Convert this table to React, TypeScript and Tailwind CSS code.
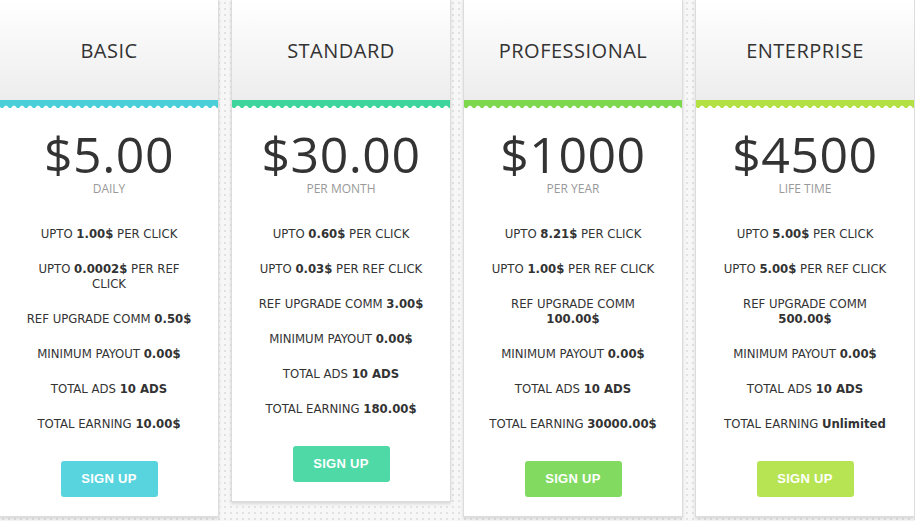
import React from 'react';

type Plan = {
  name: string;
  price: string;
  period: string;
  accent: string;
  button: string;
  features: React.ReactNode[];
};

const plans: Plan[] = [
  {
    name: 'BASIC',
    price: '$5.00',
    period: 'DAILY',
    accent: '#4acfd9',
    button: 'bg-[#58d4de]',
    features: [
      <>UPTO <b>1.00$</b> PER CLICK</>,
      <>UPTO <b>0.0002$</b> PER REF<br />CLICK</>,
      <>REF UPGRADE COMM <b>0.50$</b></>,
      <>MINIMUM PAYOUT <b>0.00$</b></>,
      <>TOTAL ADS <b>10 ADS</b></>,
      <>TOTAL EARNING <b>10.00$</b></>,
    ],
  },
  {
    name: 'STANDARD',
    price: '$30.00',
    period: 'PER MONTH',
    accent: '#3dd59c',
    button: 'bg-[#4fd9a7]',
    features: [
      <>UPTO <b>0.60$</b> PER CLICK</>,
      <>UPTO <b>0.03$</b> PER REF CLICK</>,
      <>REF UPGRADE COMM <b>3.00$</b></>,
      <>MINIMUM PAYOUT <b>0.00$</b></>,
      <>TOTAL ADS <b>10 ADS</b></>,
      <>TOTAL EARNING <b>180.00$</b></>,
    ],
  },
  {
    name: 'PROFESSIONAL',
    price: '$1000',
    period: 'PER YEAR',
    accent: '#7dd84e',
    button: 'bg-[#82da60]',
    features: [
      <>UPTO <b>8.21$</b> PER CLICK</>,
      <>UPTO <b>1.00$</b> PER REF CLICK</>,
      <>REF UPGRADE COMM<br /><b>100.00$</b></>,
      <>MINIMUM PAYOUT <b>0.00$</b></>,
      <>TOTAL ADS <b>10 ADS</b></>,
      <>TOTAL EARNING <b>30000.00$</b></>,
    ],
  },
  {
    name: 'ENTERPRISE',
    price: '$4500',
    period: 'LIFE TIME',
    accent: '#b3e042',
    button: 'bg-[#b7e452]',
    features: [
      <>UPTO <b>5.00$</b> PER CLICK</>,
      <>UPTO <b>5.00$</b> PER REF CLICK</>,
      <>REF UPGRADE COMM<br /><b>500.00$</b></>,
      <>MINIMUM PAYOUT <b>0.00$</b></>,
      <>TOTAL ADS <b>10 ADS</b></>,
      <>TOTAL EARNING <b>Unlimited</b></>,
    ],
  },
];

// scalloped accent strip under the header
function Scallop({ color }: { color: string }) {
  const id = 'sc' + color.replace('#', '');
  return (
    <svg width="100%" height="8" className="block">
      <defs>
        <pattern id={id} width="8" height="8" patternUnits="userSpaceOnUse" x="2">
          <rect width="8" height="8" fill={color} />
          <path d="M1 8 Q4 3 7 8 Z" fill="#fff" />
        </pattern>
      </defs>
      <rect width="100%" height="8" fill={`url(#${id})`} />
    </svg>
  );
}

function PlanCard({ plan }: { plan: Plan }) {
  return (
    <div className="w-[220px] shrink-0 self-start bg-white border border-[#dcdcdc] shadow-[0_2px_3px_rgba(0,0,0,0.12)]">
      <div className="h-[100px] bg-gradient-to-b from-white to-[#ededed] flex items-center justify-center">
        <h2 className="text-[20px] text-[#333] font-['Open_Sans',sans-serif] tracking-[0.5px] mt-[2px]">
          {plan.name}
        </h2>
      </div>
      <Scallop color={plan.accent} />
      <div className="flex flex-col items-center pt-[24px] pb-[19px]">
        <div className="text-[50px] leading-[44px] text-[#333] font-['Open_Sans',sans-serif] font-normal tracking-[0.5px]">
          {plan.price}
        </div>
        <div className="text-[12px] leading-[14px] text-[#999] font-['Open_Sans',sans-serif] mt-[6px]">
          {plan.period}
        </div>
        <ul className="mt-[30px] flex flex-col gap-[20px] text-center text-[13px] leading-[15px] text-[#333] font-['DejaVu_Sans_Condensed','DejaVu_Sans',sans-serif] whitespace-nowrap">
          {plan.features.map((f, i) => (
            <li key={i}>{f}</li>
          ))}
        </ul>
        <button
          className={`${plan.button} mt-[30px] w-[97px] h-[36px] rounded-[3px] text-white text-[13px] font-bold font-['Liberation_Sans',Arial,sans-serif] tracking-[0.3px]`}
        >
          SIGN UP
        </button>
      </div>
    </div>
  );
}

export default function App() {
  return (
    <div className="w-[915px] h-[521px] overflow-hidden bg-[#f7f7f7] bg-[radial-gradient(#e2e2e2_1px,transparent_1.2px)] bg-[size:6px_6px]">
      <div className="flex gap-[12px] ml-[-1px] mt-[-1px] items-start">
        {plans.map((p) => (
          <PlanCard key={p.name} plan={p} />
        ))}
      </div>
    </div>
  );
}
